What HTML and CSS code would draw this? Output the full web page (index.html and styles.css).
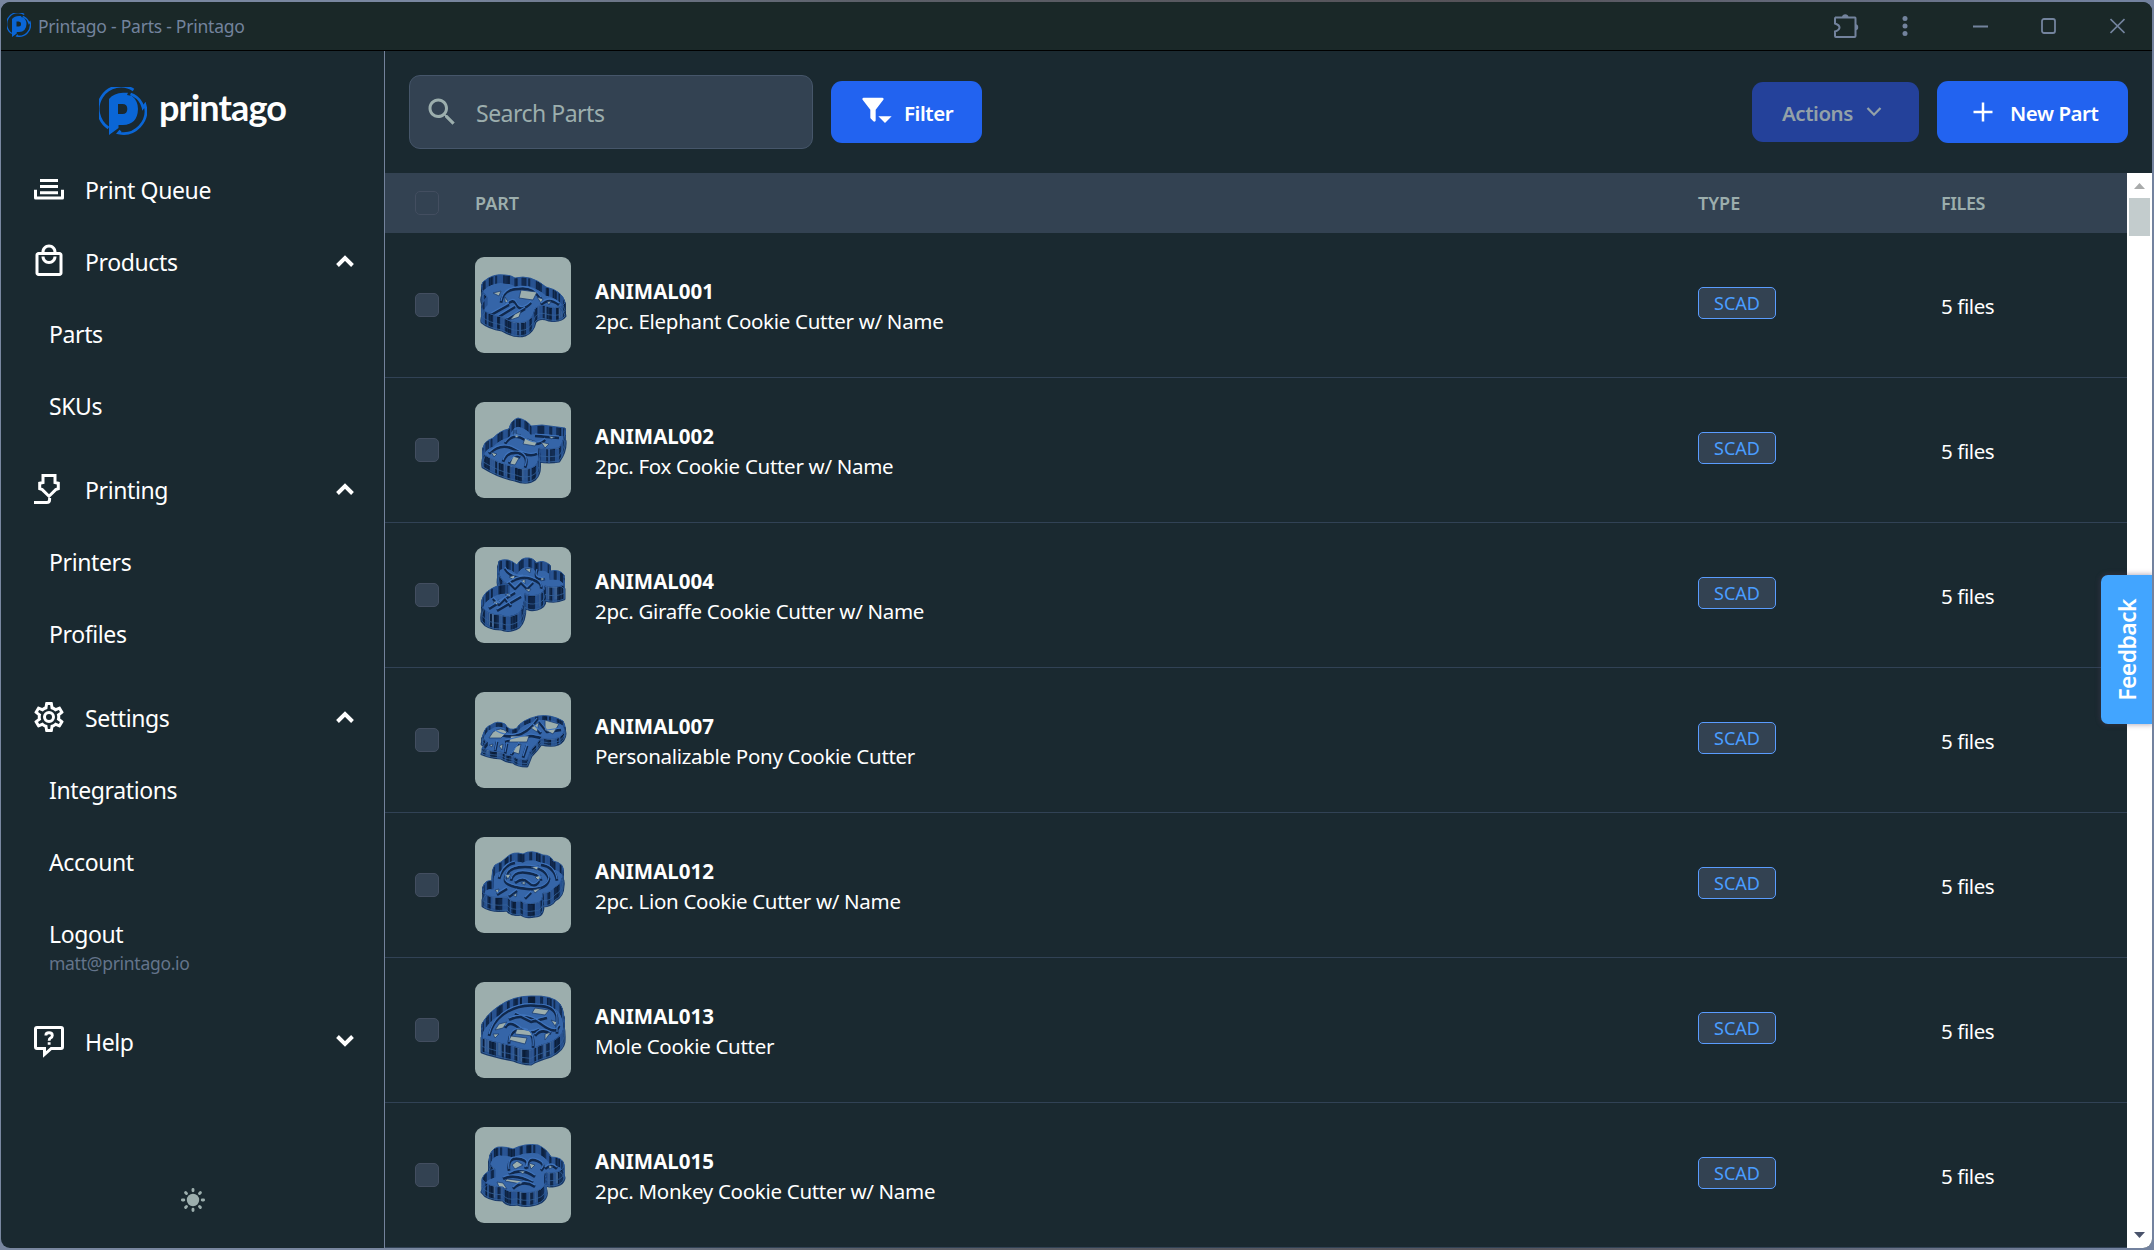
FILE: index.html
```html
<!DOCTYPE html>
<html lang="en">
<head>
<meta charset="utf-8">
<title>Printago - Parts - Printago</title>
<link rel="stylesheet" href="styles.css">
</head>
<body>
<svg class="defs" aria-hidden="true">
  <symbol id="mark" viewBox="0 0 48 48">
    <g fill="none" stroke="currentColor" stroke-width="2.700">
      <path d="M34.500 3A22.600 22.600 0 0 0 9.500 41"/>
      <path d="M31.500 7L34.500 8.200A18.800 18.800 0 0 1 44 20.500L46 17.800A22.600 22.600 0 0 1 19.500 46L21.500 43.600"/>
    </g>
    <path fill="currentColor" fill-rule="evenodd" d="M10 48V12Q15 6 24 5.800H29L28 8L33 9Q39 14 39 22Q38.500 37.500 24 38H19.500V41ZM19 17V27H23.500Q28.300 27 28.300 22Q28.300 17 23.500 17Z"/>
  </symbol>
  <symbol id="chev" viewBox="0 0 20 14"><path d="M2.500 10.500L10 3L17.500 10.500" fill="none" stroke="currentColor" stroke-width="3.900"/></symbol>
</svg>
<div class="window">
  <header class="titlebar">
    <svg class="fav"><use href="#mark"/></svg>
    <span class="title">Printago - Parts - Printago</span>
    <div class="winicons">
      <svg width="26" height="28" viewBox="0 0 26 28"><path d="M2 5.500H22Q22.500 5.500 22.500 6.500V24Q22.500 25 21.500 25H3Q2 25 2 24V19.500Q6.500 18 6.500 15.500Q6.500 13 2 11.500V6.500Q2 5.500 3 5.500Z" fill="none" stroke="currentColor" stroke-width="2"/><path d="M9 5A3.300 3.300 0 0 1 15.500 5ZM22.500 12A3.300 3.300 0 0 1 22.500 18.500Z" fill="currentColor"/></svg>
      <svg width="6" height="20" viewBox="0 0 6 20"><g fill="currentColor"><circle cx="3" cy="2.500" r="2.500"/><circle cx="3" cy="10" r="2.500"/><circle cx="3" cy="17.500" r="2.500"/></g></svg>
      <svg width="15" height="16" viewBox="0 0 15 16"><path d="M0 8.500H15" stroke="currentColor" stroke-width="1.800"/></svg>
      <svg width="15" height="16" viewBox="0 0 15 16"><rect x="1" y="1" width="13" height="14" rx="2" fill="none" stroke="currentColor" stroke-width="1.800"/></svg>
      <svg width="15" height="16" viewBox="0 0 15 16"><path d="M.5 1L14.500 15M14.500 1L.5 15" stroke="currentColor" stroke-width="1.600"/></svg>
    </div>
  </header>
  <div class="app">
    <nav class="sidebar">
      <div class="logo"><svg><use href="#mark"/></svg><span>printago</span></div>
      <div class="group">
        <a class="item"><svg viewBox="0 0 24 24"><path fill="currentColor" d="M2 12.500H4V17H20V12.500H22V18Q22 19 21 19H3Q2 19 2 18ZM6 13.500H18V15.500H6ZM6 9.400H18V11.400H6ZM6 5.300H18V7.300H6Z"/></svg><span>Print Queue</span></a>
      </div>
      <div class="group">
        <a class="item"><svg viewBox="0 0 24 24"><path fill="currentColor" d="M19 6h-2c0-2.760-2.240-5-5-5S7 3.240 7 6H5c-1.100 0-2 .9-2 2v12c0 1.100.9 2 2 2h14c1.100 0 2-.9 2-2V8c0-1.100-.9-2-2-2zm-7-3c1.660 0 3 1.340 3 3H9c0-1.660 1.340-3 3-3zm7 17H5V8h14v12zm-7-8c-1.660 0-3-1.340-3-3H7c0 2.760 2.240 5 5 5s5-2.240 5-5h-2c0 1.660-1.340 3-3 3z"/></svg><span>Products</span><svg class="chev"><use href="#chev"/></svg></a>
        <a class="item sub"><span>Parts</span></a>
        <a class="item sub"><span>SKUs</span></a>
      </div>
      <div class="group spaced">
        <a class="item"><svg viewBox="0 0 24 24"><path fill="none" stroke="currentColor" stroke-width="2" d="M8 3H16V7.700L18.200 8.200V11.800L16.500 12.400L12 16.800L7.500 12.400L5.800 11.800V8.200L8 7.700ZM12.400 18V19Q12.400 21 10.400 21H2"/></svg><span>Printing</span><svg class="chev"><use href="#chev"/></svg></a>
        <a class="item sub"><span>Printers</span></a>
        <a class="item sub"><span>Profiles</span></a>
      </div>
      <div class="group spaced">
        <a class="item"><svg viewBox="0 0 24 24"><path fill="currentColor" d="M12,8A4,4 0 0,1 16,12A4,4 0 0,1 12,16A4,4 0 0,1 8,12A4,4 0 0,1 12,8M12,10A2,2 0 0,0 10,12A2,2 0 0,0 12,14A2,2 0 0,0 14,12A2,2 0 0,0 12,10M10,22C9.750,22 9.540,21.820 9.500,21.580L9.130,18.930C8.500,18.680 7.960,18.340 7.440,17.940L4.950,18.950C4.730,19.030 4.460,18.950 4.340,18.730L2.340,15.270C2.210,15.050 2.270,14.780 2.460,14.630L4.570,12.970L4.500,12L4.570,11L2.460,9.370C2.270,9.220 2.210,8.950 2.340,8.730L4.340,5.270C4.460,5.050 4.730,4.960 4.950,5.050L7.440,6.050C7.960,5.660 8.500,5.320 9.130,5.070L9.500,2.420C9.540,2.180 9.750,2 10,2H14C14.250,2 14.460,2.180 14.500,2.420L14.870,5.070C15.500,5.320 16.040,5.660 16.560,6.050L19.050,5.050C19.270,4.960 19.540,5.050 19.660,5.270L21.660,8.730C21.790,8.950 21.730,9.220 21.540,9.370L19.430,11L19.500,12L19.430,13L21.540,14.630C21.730,14.780 21.790,15.050 21.660,15.270L19.660,18.730C19.540,18.950 19.270,19.040 19.050,18.950L16.560,17.950C16.040,18.340 15.500,18.680 14.870,18.930L14.500,21.580C14.460,21.820 14.250,22 14,22H10M11.250,4L10.880,6.610C9.680,6.860 8.620,7.500 7.850,8.390L5.440,7.350L4.690,8.650L6.800,10.200C6.400,11.370 6.400,12.640 6.800,13.800L4.680,15.360L5.430,16.660L7.860,15.620C8.630,16.500 9.680,17.140 10.870,17.380L11.240,20H12.760L13.130,17.390C14.320,17.140 15.370,16.500 16.140,15.620L18.570,16.660L19.320,15.360L17.200,13.810C17.600,12.640 17.600,11.370 17.200,10.200L19.310,8.650L18.560,7.350L16.150,8.390C15.380,7.500 14.320,6.860 13.120,6.620L12.750,4H11.250Z"/></svg><span>Settings</span><svg class="chev"><use href="#chev"/></svg></a>
        <a class="item sub"><span>Integrations</span></a>
        <a class="item sub"><span>Account</span></a>
        <a class="item sub logout"><span>Logout</span><small>matt@printago.io</small></a>
      </div>
      <div class="group help">
        <a class="item"><svg viewBox="0 0 24 24"><path fill="none" stroke="currentColor" stroke-width="2" d="M4 3H20Q21 3 21 4V16Q21 17 20 17H13.500L9 21V17H4Q3 17 3 16V4Q3 3 4 3Z"/><path fill="none" stroke="currentColor" stroke-width="1.900" d="M9.900 8.300Q9.900 6.500 12 6.500Q14.200 6.500 14.200 8.300Q14.200 9.400 13 10Q12.100 10.500 12.100 11.800M12.100 12.800V14.500"/></svg><span>Help</span><svg class="chev down"><use href="#chev"/></svg></a>
      </div>
      <div class="theme"><svg width="26" height="26" viewBox="-13 -13 26 26"><circle r="6.200" fill="currentColor"/><path stroke="currentColor" stroke-width="2.900" stroke-linecap="round" d="M0-9.200V-10.600M0 9.200V10.600M-9.200 0H-10.600M9.200 0H10.600M6.500 6.500L7.400 7.400M-6.500 6.500L-7.400 7.400M6.500-6.500L7.400-7.400M-6.500-6.500L-7.400-7.400"/></svg></div>
    </nav>
    <main class="main">
      <div class="toolbar">
        <div class="search"><svg width="36" height="36" viewBox="0 0 24 24"><path fill="currentColor" d="M15.500 14h-.79l-.28-.27C15.410 12.590 16 11.110 16 9.500 16 5.910 13.090 3 9.500 3S3 5.910 3 9.500 5.910 16 9.500 16c1.610 0 3.090-.59 4.230-1.570l.27.28v.79l5 4.990L20.490 19l-4.990-5zm-6 0C7.010 14 5 11.990 5 9.500S7.010 5 9.500 5 14 7.010 14 9.500 11.990 14 9.500 14z"/></svg><span>Search Parts</span></div>
        <button class="btn filter"><svg width="32" height="32" viewBox="0 0 24 24"><path fill="currentColor" d="M11 11L16.760 3.620A1 1 0 0 0 16.590 2.220A1 1 0 0 0 16 2H2A1 1 0 0 0 1.380 2.220A1 1 0 0 0 1.210 3.620L7 11V16.870A1 1 0 0 0 7.290 17.700L9.290 19.700A1 1 0 0 0 10.700 19.700A1 1 0 0 0 11 18.870V11M13 16L18 21L23 16Z"/></svg><span>Filter</span></button>
        <button class="btn actions"><span>Actions</span><svg width="16" height="12" viewBox="0 0 16 12"><path d="M1.500 2L8 8.700L14.500 2" fill="none" stroke="currentColor" stroke-width="2.300"/></svg></button>
        <button class="btn new"><svg width="20" height="20" viewBox="0 0 20 20"><path d="M10 .5V19.500M.5 10H19.500" stroke="currentColor" stroke-width="2.500"/></svg><span>New Part</span></button>
      </div>
      <div class="tablewrap">
        <div class="table">
          <div class="row head"><i class="check"></i><span>PART</span><span>TYPE</span><span>FILES</span></div>
          <div id="rows"></div>
        </div>
        <div class="scrollbar"><i class="arrow up"></i><i class="thumbbar"></i><i class="arrow dn"></i></div>
      </div>
    </main>
  </div>
  <div class="feedback"><span>Feedback</span></div>
</div>
<script src="parts.js"></script>
</body>
</html>
```
FILE: styles.css
```css
* { box-sizing: border-box; }
html, body { height: 100%; }
body {
  margin: 0;
  padding: 2px 2px 2px 1px;
  background: linear-gradient(90deg, #7987a0 0 20%, #5c6069 40%, #555258 70%, #73829f 98%);
  font-family: "Noto Sans", sans-serif;
  color: #fff;
  overflow: hidden;
}
.defs { position: absolute; width: 0; height: 0; }
.window {
  position: relative;
  height: 1246px;
  background: #1a2930;
  border-radius: 9px;
  overflow: hidden;
  display: flex;
  flex-direction: column;
}
.titlebar {
  height: 49px;
  flex: none;
  display: flex;
  align-items: center;
  background: #1a2828;
  border-bottom: 1px solid #000;
  color: #73839d;
  padding: 0 27px 0 6px;
}
.fav { width: 24px; height: 24px; color: #0a66d6; margin: -2px 7px 0 0; }
.title { font-size: 17.5px; letter-spacing: -.24px; }
.winicons { margin-left: auto; display: flex; align-items: center; padding-bottom: 1px; }
.winicons svg:nth-child(2) { margin-left: 43px; }
.winicons svg:nth-child(3) { margin-left: 65px; }
.winicons svg:nth-child(4) { margin-left: 53px; }
.winicons svg:nth-child(5) { margin-left: 54px; }

.app { flex: 1; display: flex; min-height: 0; }
.sidebar {
  width: 384px;
  flex: none;
  border-right: 1px solid #73829b;
  display: flex;
  flex-direction: column;
}
.logo { height: 102px; padding-top: 18px; display: flex; align-items: center; justify-content: center; gap: 12px; }
.logo svg { width: 48px; height: 48px; color: #0a66d6; }
.logo span { font: 700 36px/48px Lato, sans-serif; letter-spacing: -.9px; margin-top: -8px; }
.spaced { margin-top: 12px; }
.help { margin-top: 36px; }
.item { height: 72px; display: flex; align-items: center; padding: 0 29px 0 30px; }
.item > svg { width: 36px; height: 36px; flex: none; }
.item span { font-size: 23px; line-height: 30px; letter-spacing: -.38px; padding-top: 2px; }
.item > svg + span { margin-left: 18px; }
.item > .chev { width: 20px; height: 14px; margin-left: auto; margin-top: 2px; }
.item > .chev.down { transform: scaleY(-1); margin-top: -2px; }
.item.sub { padding-left: 48px; }
.item.logout { flex-direction: column; align-items: flex-start; padding-top: 20px; justify-content: flex-start; }
.logout small { font-size: 17.5px; line-height: 24px; letter-spacing: -.28px; color: #64748b; margin-top: 2px; }
.theme { margin-top: auto; height: 96px; display: flex; align-items: center; justify-content: center; color: #9caead; }

.main { flex: 1; display: flex; flex-direction: column; min-width: 0; }
.toolbar { height: 122px; flex: none; display: flex; align-items: center; padding: 0 24px; }
.search {
  width: 404px; height: 74px;
  border: 1px solid #46566a;
  border-radius: 11px;
  background: #334252;
  color: #9caead;
  display: flex; align-items: center;
  padding: 0 14px;
  font-size: 23px; letter-spacing: -.5px;
}
.search span { margin-left: 16px; padding-top: 2px; }
.btn {
  border: 0; padding: 0; margin: 0;
  display: flex; align-items: center;
  height: 62px;
  border-radius: 11px;
  background: #2263f0;
  color: #fff;
  font: 600 20.5px/30px "Noto Sans", sans-serif;
  letter-spacing: -.45px;
}
.btn span { padding-top: 1px; }
.filter { width: 151px; margin-left: 18px; padding-left: 30px; gap: 11px; }
.filter svg { margin-top: -2px; }
.actions { width: 167px; height: 60px; margin-left: auto; padding-left: 30px; gap: 13px; background: #24419a; color: #93a1a8; }
.new { width: 191px; margin-left: 18px; padding-left: 36px; gap: 17px; }

.tablewrap { flex: 1; display: flex; min-height: 0; }
.table { flex: 1; overflow: hidden; }
.row {
  display: grid;
  grid-template-columns: 60px 1fr 244px 185px;
  align-items: center;
  height: 145px;
  padding-left: 30px;
  border-bottom: 1px solid #314255;
}
.head { height: 60px; border: 0; background: #334252; color: #9caead; font-weight: 600; font-size: 18px; }
.head > span:last-child { letter-spacing: -.4px; margin-left: -1px; }
.check { width: 24px; height: 24px; border: 1px solid #434e60; border-radius: 5px; background: #334252; }
.part { display: flex; align-items: center; gap: 24px; }
.thumb { width: 96px; height: 96px; border-radius: 9px; background: #9caead; display: block; }
.info { font-size: 20.5px; line-height: 30px; padding-top: 2px; letter-spacing: -.3px; }
.info b { display: block; letter-spacing: 0; }
.tag {
  justify-self: start;
  width: 78px; height: 32px;
  margin-top: -4px;
  border: 1px solid #5a9cff;
  border-radius: 5px;
  background: #334252;
  color: #4a9dff;
  font-size: 18px; line-height: 30px;
  text-align: center;
}
.files { font-size: 20.5px; letter-spacing: -.4px; line-height: 30px; padding-top: 1px; margin-left: -1px; }

.scrollbar { width: 25px; flex: none; background: #fff; display: flex; flex-direction: column; align-items: center; padding: 10px 0; }
.arrow { width: 11px; height: 6px; }
.up { background: #a9abab; clip-path: polygon(50% 0, 100% 100%, 0 100%); }
.dn { margin-top: auto; background: #49536b; clip-path: polygon(0 0, 100% 0, 50% 100%); }
.thumbbar { width: 21px; height: 38px; margin-top: 9px; background: #c3cccd; }

.feedback {
  position: absolute;
  right: 0; top: 573px;
  width: 51px; height: 149px;
  border-radius: 7px 0 0 7px;
  background: #42a5ff;
  box-shadow: 0 0 5px 1px rgba(80, 60, 90, .4);
  display: flex; align-items: center; justify-content: center;
}
.feedback span { writing-mode: vertical-rl; transform: rotate(180deg); font-weight: 600; font-size: 23px; line-height: 30px; letter-spacing: -.6px; }
```
FILE: parts.js
```js
// Each part has a rim outline, a wall height, a floor with cut-out holes and raised line work.
const parts = [
  { code: "ANIMAL001", name: "2pc. Elephant Cookie Cutter w/ Name", h: 13,
    rim: "M8 25Q18 16 30 18Q36 18 40 21Q56 17 71 30Q88 34 90 46Q86 52 74 50Q64 46 60 52Q58 62 50 65Q40 68 27 60Q14 58 7 52Q6 46 12 40Q4 32 8 25Z",
    holes: "M46 33L62 35L58 43L44 41ZM62 40L68 42L66 46ZM18 36L26 34L24 39ZM40 57L46 54L44 60L35 63ZM72 45L76 44L74 48ZM30 40L34 46L30 45Z",
    lines: "M26 44Q28 30 44 30Q58 28 66 40M30 48Q38 38 42 46T56 44M16 56L34 46M22 59L40 48M32 61L50 50M66 46Q74 38 84 46" },
  { code: "ANIMAL002", name: "2pc. Fox Cookie Cutter w/ Name", h: 13,
    rim: "M43 16Q52 18 56 24L67 23L90 26Q91 36 84 46Q74 48 64 46Q66 58 60 64Q52 70 40 65Q24 62 8 52Q6 40 18 36Q26 28 34 27Q36 18 43 16Z",
    holes: "M38 31L46 33L41 36ZM50 36L62 40L60 44L48 42ZM66 40L74 42L70 46ZM38 54L44 56L40 63L35 62ZM16 50L22 52L19 55ZM74 34L80 35L76 37Z",
    lines: "M30 40Q38 28 50 36T70 36M14 50Q26 38 40 46T62 50M28 58Q32 46 46 50Q54 54 50 64M34 60Q40 50 45 54M60 32L84 34M40 26V34" },
  { code: "ANIMAL004", name: "2pc. Giraffe Cookie Cutter w/ Name", h: 14,
    rim: "M24 14Q33 10 42 18Q46 10 54 11Q60 12 61 16Q68 12 75 18V24Q85 22 89 28V38Q80 42 70 39Q70 46 62 48Q54 50 50 46Q50 60 44 66Q34 72 26 68Q12 68 7 60Q5 48 16 42Q26 36 34 38Q20 32 24 14Z",
    holes: "M34 30L40 28L39 33ZM46 34L50 32L50 37ZM50 42L56 42L54 45ZM18 55L24 53L22 58ZM30 48L34 46L36 50ZM50 22L56 21L55 26ZM66 30L70 32L66 34Z",
    lines: "M32 36Q44 26 56 30T66 40M14 60L40 44M22 62L46 48M30 20Q36 30 48 28M34 34L40 40L46 34L52 40L58 34M18 50L24 56L30 50L36 58M62 22Q58 32 70 30" },
  { code: "ANIMAL007", name: "Personalizable Pony Cookie Cutter", h: 6,
    rim: "M7 46Q10 34 16 33Q22 28 30 32Q34 40 42 36Q46 28 63 24Q76 22 88 29Q92 36 88 42Q82 50 66 46Q62 52 56 58L52 68Q42 68 38 64Q32 64 26 60Q16 60 7 56L12 50Z",
    holes: "M18 40Q26 34 32 40L26 46L14 46ZM36 44L54 44L52 50L34 50ZM56 36L64 30L62 40ZM70 28L84 32L78 42L70 38ZM24 54L28 52L27 58ZM40 55L46 52L44 62L38 60ZM14 53L18 52L17 55Z",
    lines: "M20 38Q30 44 40 42Q52 40 62 26M30 48L56 42L66 44M22 48L20 58M32 50L30 60M44 50L36 62M52 52L48 64M64 28L72 38L86 36M58 32L66 40" },
  { code: "ANIMAL012", name: "2pc. Lion Cookie Cutter w/ Name", h: 13,
    rim: "M8 50Q10 42 18 44Q16 34 20 28Q26 26 32 20Q38 14 48 17Q56 12 68 18Q76 18 78 24Q90 26 88 36Q88 46 80 50Q76 56 68 56Q68 66 60 66Q50 68 46 64Q36 66 32 60Q16 62 8 56Z",
    holes: "M56 30L64 29L62 33ZM30 38L36 37L33 42ZM60 40L66 38L64 44ZM58 53L66 51L60 56ZM20 53L24 52L23 57ZM46 46L50 44L50 48ZM38 58L42 56L41 60Z",
    lines: "M30 42Q30 28 50 28T74 40Q72 52 52 50T30 42M36 42Q38 32 52 34T66 42M40 44Q48 38 54 44T64 42M24 40Q28 26 40 24M66 26Q80 28 82 42M22 56L32 50M34 58L42 52M50 60L56 54" },
  { code: "ANIMAL013", name: "Mole Cookie Cutter", h: 14,
    rim: "M7 42Q12 32 24 24Q38 14 56 14Q78 13 85 22Q90 30 89 46Q88 54 76 60Q62 64 56 68Q46 68 38 64Q18 60 7 56Z",
    holes: "M60 26L74 28L70 33L57 31ZM24 42L32 40L28 46L20 48ZM42 47L54 48L58 54L40 52ZM36 54L52 56L50 62L34 58ZM76 38L82 40L80 44ZM70 52L76 50L70 58ZM18 52L24 52L20 56Z",
    lines: "M14 52Q18 36 32 28Q46 20 62 22Q82 22 82 36V50M34 36Q50 28 66 40T84 42M30 44Q34 36 44 44T64 46M34 60Q34 46 46 46Q60 46 58 64M60 52Q66 44 76 50M40 30L56 38L72 34" },
  { code: "ANIMAL015", name: "2pc. Monkey Cookie Cutter w/ Name", h: 13,
    rim: "M15 28Q18 19 27 20Q32 20 38 22Q50 16 63 18Q72 22 76 30Q88 30 89 38Q88 46 74 46Q70 44 70 48Q74 56 66 62Q54 68 42 64Q32 66 28 60Q12 60 7 52Q10 44 20 42Q12 38 15 28Z",
    holes: "M42 34L48 38L40 42L37 38ZM54 36L60 38L56 42ZM44 44L50 44L48 47ZM32 52L48 54L46 57L30 54ZM22 55L28 56L32 62L24 60ZM74 38L78 40L74 42Z",
    lines: "M34 42Q32 28 44 30T50 40M52 40Q52 28 62 32T66 42M34 46Q46 38 60 48M28 50Q40 44 58 54M38 60Q48 50 60 58M70 40Q76 34 82 40" }
];

// Stacks copies of the outline so that the dashes line up as vertical wall facets.
const wall = (i, from, to) => {
  let out = "";
  for (let y = from; y >= to; y -= 1) {
    out += `<use href="#rim${i}" y="${y}" stroke="#285290" stroke-width="1.300"/>
      <use href="#rim${i}" y="${y}" stroke="#0b1d38" stroke-width="1.300" stroke-dasharray="3 4 5 2 2 6 7 5"/>`;
  }
  return out;
};

const cutter = (p, i) => `<svg class="thumb" viewBox="0 0 96 96" role="img" aria-label="${p.name}">
  <defs><path id="rim${i}" d="${p.rim}"/><clipPath id="cut${i}"><use href="#rim${i}"/></clipPath></defs>
  <g stroke-linejoin="round">
    <g fill="none">
      <use href="#rim${i}" y="${p.h}" stroke="#1c3c6c" stroke-width="3"/>
      ${wall(i, p.h, 1)}
      <use href="#rim${i}" y="${p.h}" stroke="#346199" stroke-width=".9"/>
      <use href="#rim${i}" y="${p.h * 0.6}" stroke="#346199" stroke-width=".8"/>
    </g>
    <g clip-path="url(#cut${i})">
      <use href="#rim${i}" fill="#3565a8"/>
      <g fill="none">${wall(i, p.h * 0.6, 0)}</g>
      <path d="${p.lines}" transform="translate(0 1.800)" fill="none" stroke="#10284c" stroke-width="2.800"/>
      <path d="${p.holes}" fill="#9caead" stroke="#1c3f74" stroke-width=".8"/>
      <path d="${p.lines}" fill="none" stroke="#3f74bd" stroke-width="1.200"/>
    </g>
    <use href="#rim${i}" fill="none" stroke="#2b5796" stroke-width="1"/>
  </g>
</svg>`;

document.getElementById("rows").innerHTML = parts.map((p, i) => `<div class="row">
  <i class="check"></i>
  <div class="part">${cutter(p, i)}<div class="info"><b>${p.code}</b>${p.name}</div></div>
  <span class="tag">SCAD</span>
  <span class="files">5 files</span>
</div>`).join("");
```
